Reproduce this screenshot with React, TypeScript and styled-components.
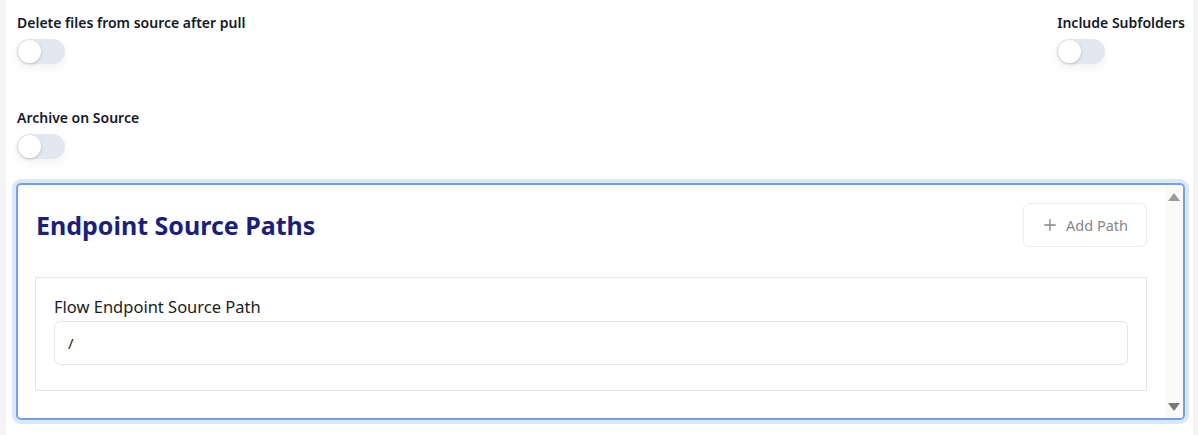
import React, { useState } from 'react'
import styled, { createGlobalStyle } from 'styled-components'
import { Plus } from 'lucide-react'

const GlobalStyle = createGlobalStyle`
	html, body {
		margin: 0;
		padding: 0;
		background: #f4f4f5;
	}
	body {
		font-family: 'Noto Sans', 'Open Sans', Arial, sans-serif;
		color: #1a1d2e;
	}
`

const Panel = styled.div`
	margin: 0 5px 0 6px;
	background: #fff;
	height: 435px;
	padding: 13px 8px 0 10px;
	box-sizing: border-box;
`

const Row = styled.div`
	display: flex;
	justify-content: space-between;
	margin-bottom: 44px;
`

const Field = styled.div`
	display: flex;
	flex-direction: column;
	gap: 6px;
	padding-left: 1px;
`

const Label = styled.label`
	font-size: 14px;
	font-weight: 600;
	line-height: 20px;
	color: #141827;
`

const Track = styled.button<{ $on: boolean }>`
	width: 48px;
	height: 25px;
	border: none;
	padding: 0;
	border-radius: 13px;
	background: ${p => (p.$on ? '#6fa0ee' : '#e3e7f0')};
	position: relative;
	cursor: pointer;
	box-shadow: 0 4px 10px rgba(30, 40, 80, 0.06);
`

const Knob = styled.span<{ $on: boolean }>`
	position: absolute;
	top: 1px;
	left: ${p => (p.$on ? '24px' : '1px')};
	width: 23px;
	height: 23px;
	border-radius: 50%;
	background: #fff;
	box-shadow: 0 1px 3px rgba(0, 0, 0, 0.18);
	transition: left 0.15s;
`

const Card = styled.div`
	margin-top: 24px;
	height: 237px;
	border: 2px solid #70a1ee;
	border-radius: 5px;
	box-shadow: 0 0 0 4px #dbe7fb;
	display: flex;
	overflow: hidden;
	box-sizing: border-box;
`

const CardBody = styled.div`
	flex: 1;
	padding: 18px 18px 0 17px;
`

const CardHeader = styled.div`
	display: flex;
	justify-content: space-between;
	align-items: center;
	margin-bottom: 30px;
`

const Title = styled.h2`
	margin: 0;
	font-size: 25px;
	font-weight: 700;
	color: #1b1f7c;
	padding-left: 1px;
`

const AddButton = styled.button`
	display: flex;
	align-items: center;
	gap: 7px;
	height: 44px;
	padding: 0 18px 0 17px;
	border: 1px solid #ececf0;
	border-radius: 6px;
	background: #fff;
	color: #86868c;
	font-family: inherit;
	font-size: 14.5px;
	cursor: pointer;
`

const PathBox = styled.div`
	border: 1px solid #e4e6ee;
	padding: 18px 18px 25px 18px;
`

const PathLabel = styled.label`
	display: block;
	font-size: 16.5px;
	line-height: 22px;
	color: #1c1c22;
	margin-bottom: 3px;
`

const PathInput = styled.input`
	display: block;
	width: 100%;
	box-sizing: border-box;
	height: 44px;
	border: 1px solid #e3e6ee;
	border-radius: 6px;
	padding: 0 13px;
	font-family: inherit;
	font-size: 15px;
	color: #1c1c22;
	outline: none;
`

const ScrollBar = styled.div`
	width: 18px;
	background: #fafafa;
	display: flex;
	flex-direction: column;
	justify-content: space-between;
	align-items: center;
	padding: 8px 0 7px;
	box-sizing: border-box;
`

const Arrow = styled.span<{ $down?: boolean }>`
	width: 0;
	height: 0;
	border-left: 6.5px solid transparent;
	border-right: 6.5px solid transparent;
	${p =>
		p.$down
			? 'border-top: 8px solid #7a7a7a;'
			: 'border-bottom: 8px solid #9c9c9c;'}
`

const Toggle = ({ label }: { label: string }) => {
	const [on, setOn] = useState(false)
	return (
		<Field>
			<Label>{label}</Label>
			<Track $on={on} onClick={() => setOn(!on)}>
				<Knob $on={on} />
			</Track>
		</Field>
	)
}

const App = () => {
	const [path, setPath] = useState('/')

	return (
		<>
			<GlobalStyle />
			<Panel>
				<Row>
					<Toggle label="Delete files from source after pull" />
					<Toggle label="Include Subfolders" />
				</Row>
				<Toggle label="Archive on Source" />
				<Card>
					<CardBody>
						<CardHeader>
							<Title>Endpoint Source Paths</Title>
							<AddButton>
								<Plus size={18} strokeWidth={1.8} />
								Add Path
							</AddButton>
						</CardHeader>
						<PathBox>
							<PathLabel>Flow Endpoint Source Path</PathLabel>
							<PathInput value={path} onChange={e => setPath(e.target.value)} />
						</PathBox>
					</CardBody>
					<ScrollBar>
						<Arrow />
						<Arrow $down />
					</ScrollBar>
				</Card>
			</Panel>
		</>
	)
}

export default App
